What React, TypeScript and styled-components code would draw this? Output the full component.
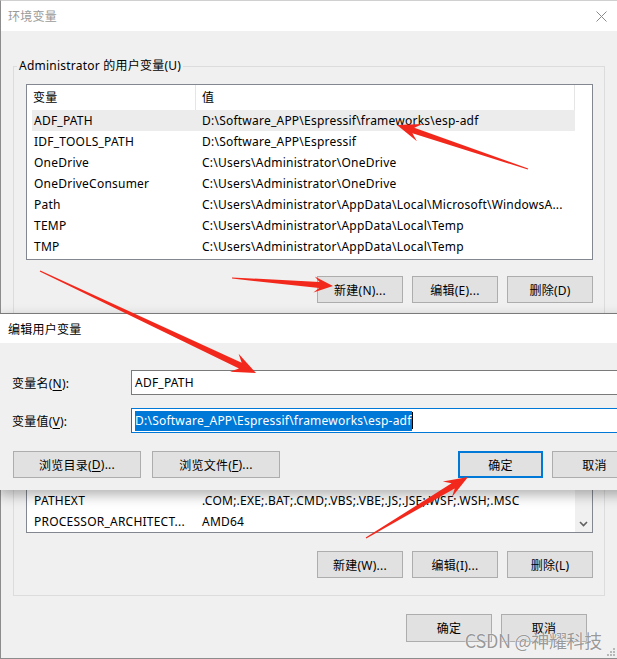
import React from "react";
import styled, { createGlobalStyle } from "styled-components";

const GlobalStyle = createGlobalStyle`
  html, body { margin: 0; padding: 0; background: #f0f0f0; }
  body {
    width: 617px; height: 659px; overflow: hidden;
    font-family: "Noto Sans", "Noto Sans CJK SC", sans-serif;
    font-size: 12px; letter-spacing: 0.23px; color: #000;
  }
  * { box-sizing: border-box; }
`;

const Stage = styled.div`
  position: relative;
  width: 617px;
  height: 659px;
  overflow: hidden;
`;

const Window = styled.div`
  position: relative;
  display: flex;
  flex-direction: column;
  width: 617px;
  height: 659px;
  background: #f0f0f0;
  border-left: 1px solid #8c8c8c;
  border-top: 1px solid #d0d0d0;
  border-bottom: 1px solid #8c8c8c;
`;

const TitleBar = styled.div<{ $h: number; $pl: number; $active?: boolean }>`
  display: flex;
  align-items: center;
  justify-content: space-between;
  flex-shrink: 0;
  height: ${(p) => p.$h}px;
  padding: 0 10px 0 ${(p) => p.$pl}px;
  background: #fff;
  color: ${(p) => (p.$active ? "#000" : "#9a9a9a")};
  font-size: 12px;
`;

const Body = styled.div`
  display: flex;
  flex-direction: column;
  padding: 0 12px;
`;

const GroupBox = styled.fieldset<{ $mt: number }>`
  margin: ${(p) => p.$mt}px 0 0;
  padding: 0;
  min-width: 0;
  border: 1px solid #dcdcdc;
`;

const Legend = styled.legend`
  margin-left: 3px;
  padding: 0 2px;
  line-height: 16px;
  font-size: 12px;
`;

const GroupInner = styled.div<{ $pb: number }>`
  display: flex;
  flex-direction: column;
  padding: 10px 11px ${(p) => p.$pb}px 12px;
`;

const ListView = styled.div<{ $h: number }>`
  display: flex;
  height: ${(p) => p.$h}px;
  border: 1px solid #828790;
  background: #fff;
  overflow: hidden;
`;

const ListMain = styled.div`
  display: flex;
  flex-direction: column;
  flex: 1;
  min-width: 0;
`;

const Header = styled.div<{ $cols: string }>`
  display: grid;
  grid-template-columns: ${(p) => p.$cols};
  height: 25px;
  flex-shrink: 0;
`;

const HeaderCell = styled.div<{ $divider?: boolean }>`
  padding-left: 6px;
  line-height: 25px;
  border-right: ${(p) => (p.$divider ? "1px solid #e5e5e5" : "none")};
`;

const Rows = styled.div<{ $end?: boolean }>`
  display: flex;
  flex-direction: column;
  flex: 1;
  justify-content: ${(p) => (p.$end ? "flex-end" : "flex-start")};
  overflow: hidden;
`;

const Row = styled.div<{ $selected?: boolean }>`
  display: grid;
  grid-template-columns: 164px 1fr;
  flex-shrink: 0;
  height: 21px;
  width: 543px;
  margin-left: 5px;
  line-height: 21px;
  background: ${(p) => (p.$selected ? "#ececec" : "transparent")};
`;

const Cell = styled.div<{ $pl: number }>`
  padding-left: ${(p) => p.$pl}px;
  white-space: nowrap;
  overflow: hidden;
`;

const ScrollBar = styled.div`
  display: flex;
  flex-direction: column;
  justify-content: flex-end;
  width: 17px;
  flex-shrink: 0;
  background: #f0f0f0;
`;

const ScrollArrow = styled.div`
  display: flex;
  align-items: center;
  justify-content: center;
  height: 17px;
`;

const ButtonRow = styled.div<{ $mt: number; $pr?: number }>`
  display: flex;
  justify-content: flex-end;
  gap: 9px;
  margin-top: ${(p) => p.$mt}px;
  padding-right: ${(p) => p.$pr ?? 0}px;
`;

const Button = styled.div<{ $w: number; $h?: number; $default?: boolean }>`
  display: flex;
  align-items: center;
  justify-content: center;
  width: ${(p) => p.$w}px;
  height: ${(p) => p.$h ?? 27}px;
  flex-shrink: 0;
  background: #e1e1e1;
  border: ${(p) => (p.$default ? "2px solid #0078d7" : "1px solid #adadad")};
  font-size: 12px;
  white-space: nowrap;
`;

const U = styled.span`
  text-decoration: underline;
  text-underline-offset: 2px;
`;

const Grip = styled.svg`
  position: absolute;
  right: 2px;
  bottom: 2px;
`;

/* front dialog */
const EditDialog = styled.div`
  position: absolute;
  top: 313px;
  left: -1px;
  width: 651px;
  display: flex;
  flex-direction: column;
  background: #f0f0f0;
  border-top: 1px solid #7a7a7a;
  box-shadow: 0 5px 12px rgba(0, 0, 0, 0.3);
  z-index: 2;
`;

const EditBody = styled.div`
  display: flex;
  flex-direction: column;
  gap: 13px;
  padding: 27px 13px 12px 13px;
`;

const FieldRow = styled.div`
  display: grid;
  grid-template-columns: 119px 1fr;
  align-items: center;
  height: 25px;
`;

const Label = styled.div`
  font-size: 12px;
  white-space: nowrap;
`;

const TextBox = styled.div<{ $focused?: boolean }>`
  display: flex;
  align-items: center;
  height: 25px;
  padding-left: 3px;
  background: #fff;
  border: 1px solid ${(p) => (p.$focused ? "#0078d7" : "#7a7a7a")};
  white-space: nowrap;
  overflow: hidden;
`;

const Selected = styled.span`
  display: inline-block;
  line-height: 20px;
  background: #0078d7;
  color: #fff;
`;

const Caret = styled.span`
  display: inline-block;
  width: 1px;
  height: 17px;
  background: #000;
`;

const DialogButtons = styled.div`
  display: flex;
  justify-content: space-between;
  margin-top: 5px;
  padding-left: 1px;
`;

const ButtonGroup = styled.div<{ $gap: number }>`
  display: flex;
  gap: ${(p) => p.$gap}px;
`;

const Overlay = styled.svg`
  position: absolute;
  left: 0;
  top: 0;
  z-index: 5;
  pointer-events: none;
`;

const Watermark = styled.div`
  position: absolute;
  right: 15px;
  bottom: 8px;
  z-index: 6;
  font-family: "Noto Sans CJK SC", "Noto Sans", sans-serif;
  font-size: 18px;
  line-height: 22px;
  letter-spacing: -0.3px;
  color: rgba(125, 125, 125, 0.8);
  text-shadow: 0 0 1px #fff, 0 0 1px #fff;
`;

const userVars: [string, string][] = [
  ["ADF_PATH", "D:\\Software_APP\\Espressif\\frameworks\\esp-adf"],
  ["IDF_TOOLS_PATH", "D:\\Software_APP\\Espressif"],
  ["OneDrive", "C:\\Users\\Administrator\\OneDrive"],
  ["OneDriveConsumer", "C:\\Users\\Administrator\\OneDrive"],
  ["Path", "C:\\Users\\Administrator\\AppData\\Local\\Microsoft\\WindowsA..."],
  ["TEMP", "C:\\Users\\Administrator\\AppData\\Local\\Temp"],
  ["TMP", "C:\\Users\\Administrator\\AppData\\Local\\Temp"],
];

const sysVars: [string, string][] = [
  ["ComSpec", "C:\\Windows\\system32\\cmd.exe"],
  ["DriverData", "C:\\Windows\\System32\\Drivers\\DriverData"],
  ["NUMBER_OF_PROCESSORS", "8"],
  ["OS", "Windows_NT"],
  ["Path", "C:\\Windows\\system32;C:\\Windows;..."],
  ["PATHEXT", ".COM;.EXE;.BAT;.CMD;.VBS;.VBE;.JS;.JSE;.WSF;.WSH;.MSC"],
  ["PROCESSOR_ARCHITECT...", "AMD64"],
];

function arrow(
  x1: number,
  y1: number,
  x2: number,
  y2: number,
  head = 22,
  wing = 9,
  neck = 3,
  tail = 0.6
): string {
  const dx = x2 - x1;
  const dy = y2 - y1;
  const len = Math.hypot(dx, dy);
  const ux = dx / len;
  const uy = dy / len;
  const nx = -uy;
  const ny = ux;
  const nkx = x2 - ux * head * 0.72;
  const nky = y2 - uy * head * 0.72;
  const wgx = x2 - ux * head;
  const wgy = y2 - uy * head;
  const pts = [
    [x1 + nx * tail, y1 + ny * tail],
    [nkx + nx * neck, nky + ny * neck],
    [wgx + nx * wing, wgy + ny * wing],
    [x2, y2],
    [wgx - nx * wing, wgy - ny * wing],
    [nkx - nx * neck, nky - ny * neck],
    [x1 - nx * tail, y1 - ny * tail],
  ];
  return pts.map((p) => `${p[0].toFixed(1)},${p[1].toFixed(1)}`).join(" ");
}

function CloseIcon() {
  return (
    <svg width="11" height="11" viewBox="0 0 11 11">
      <path d="M0.5 0.5 L10.5 10.5 M10.5 0.5 L0.5 10.5" stroke="#8a8a8a" strokeWidth="1" fill="none" />
    </svg>
  );
}

function ChevronDown() {
  return (
    <svg width="9" height="6" viewBox="0 0 9 6">
      <path d="M1 1 L4.5 4.5 L8 1" stroke="#606060" strokeWidth="1.6" fill="none" />
    </svg>
  );
}

export default function App() {
  const red = "#f3281c";
  return (
    <Stage>
      <GlobalStyle />
      <Window>
        <TitleBar $h={30} $pl={7}>
          <span>环境变量</span>
          <CloseIcon />
        </TitleBar>
        <Body>
          <GroupBox $mt={27}>
            <Legend>Administrator 的用户变量(U)</Legend>
            <GroupInner $pb={11}>
              <ListView $h={176}>
                <ListMain>
                  <Header $cols="169px 379px 17px">
                    <HeaderCell $divider>变量</HeaderCell>
                    <HeaderCell $divider>值</HeaderCell>
                    <HeaderCell />
                  </Header>
                  <Rows>
                    {userVars.map(([k, v], i) => (
                      <Row key={k} $selected={i === 0}>
                        <Cell $pl={2}>{k}</Cell>
                        <Cell $pl={6}>{v}</Cell>
                      </Row>
                    ))}
                  </Rows>
                </ListMain>
              </ListView>
              <ButtonRow $mt={16}>
                <Button $w={86}>新建(N)...</Button>
                <Button $w={86}>编辑(E)...</Button>
                <Button $w={86}>删除(D)</Button>
              </ButtonRow>
            </GroupInner>
          </GroupBox>
          <GroupBox $mt={12}>
            <Legend>系统变量(S)</Legend>
            <GroupInner $pb={17}>
              <ListView $h={180}>
                <ListMain>
                  <Header $cols="169px 1fr">
                    <HeaderCell $divider>变量</HeaderCell>
                    <HeaderCell>值</HeaderCell>
                  </Header>
                  <Rows $end>
                    {sysVars.map(([k, v]) => (
                      <Row key={k}>
                        <Cell $pl={2}>{k}</Cell>
                        <Cell $pl={6}>{v}</Cell>
                      </Row>
                    ))}
                  </Rows>
                </ListMain>
                <ScrollBar>
                  <ScrollArrow>
                    <ChevronDown />
                  </ScrollArrow>
                </ScrollBar>
              </ListView>
              <ButtonRow $mt={18}>
                <Button $w={86}>新建(W)...</Button>
                <Button $w={86}>编辑(I)...</Button>
                <Button $w={86}>删除(L)</Button>
              </ButtonRow>
            </GroupInner>
          </GroupBox>
          <ButtonRow $mt={18} $pr={18}>
            <Button $w={86} $h={28}>确定</Button>
            <Button $w={86} $h={28}>取消</Button>
          </ButtonRow>
        </Body>
        <Grip width="8" height="8" viewBox="0 0 8 8">
          <g fill="#b8b8b8">
            <rect x="6" y="0" width="2" height="2" />
            <rect x="3" y="3" width="2" height="2" />
            <rect x="6" y="3" width="2" height="2" />
            <rect x="0" y="6" width="2" height="2" />
            <rect x="3" y="6" width="2" height="2" />
            <rect x="6" y="6" width="2" height="2" />
          </g>
        </Grip>
      </Window>

      <EditDialog>
        <TitleBar $h={29} $pl={9} $active>
          <span>编辑用户变量</span>
        </TitleBar>
        <EditBody>
          <FieldRow>
            <Label>
              变量名(<U>N</U>):
            </Label>
            <TextBox>ADF_PATH</TextBox>
          </FieldRow>
          <FieldRow>
            <Label>
              变量值(<U>V</U>):
            </Label>
            <TextBox $focused>
              <Selected>D:\Software_APP\Espressif\frameworks\esp-adf</Selected>
              <Caret />
            </TextBox>
          </FieldRow>
          <DialogButtons>
            <ButtonGroup $gap={11}>
              <Button $w={128}>
                浏览目录(<U>D</U>)...
              </Button>
              <Button $w={128}>
                浏览文件(<U>F</U>)...
              </Button>
            </ButtonGroup>
            <ButtonGroup $gap={9}>
              <Button $w={85} $default>
                确定
              </Button>
              <Button $w={85}>取消</Button>
            </ButtonGroup>
          </DialogButtons>
        </EditBody>
      </EditDialog>

      <Overlay width="617" height="659" viewBox="0 0 617 659">
        <g fill={red}>
          <polygon points={arrow(528, 169, 397, 125, 24, 9, 3, 0.6)} />
          <polygon points={arrow(232, 278, 333, 286, 19, 8, 3, 0.6)} />
          <polygon points={arrow(40, 271, 256, 373, 24, 10, 3.2, 0.6)} />
          <polygon points={arrow(366, 538, 468, 477, 24, 9, 3, 0.6)} />
        </g>
      </Overlay>
      <Watermark>CSDN @神耀科技</Watermark>
    </Stage>
  );
}
